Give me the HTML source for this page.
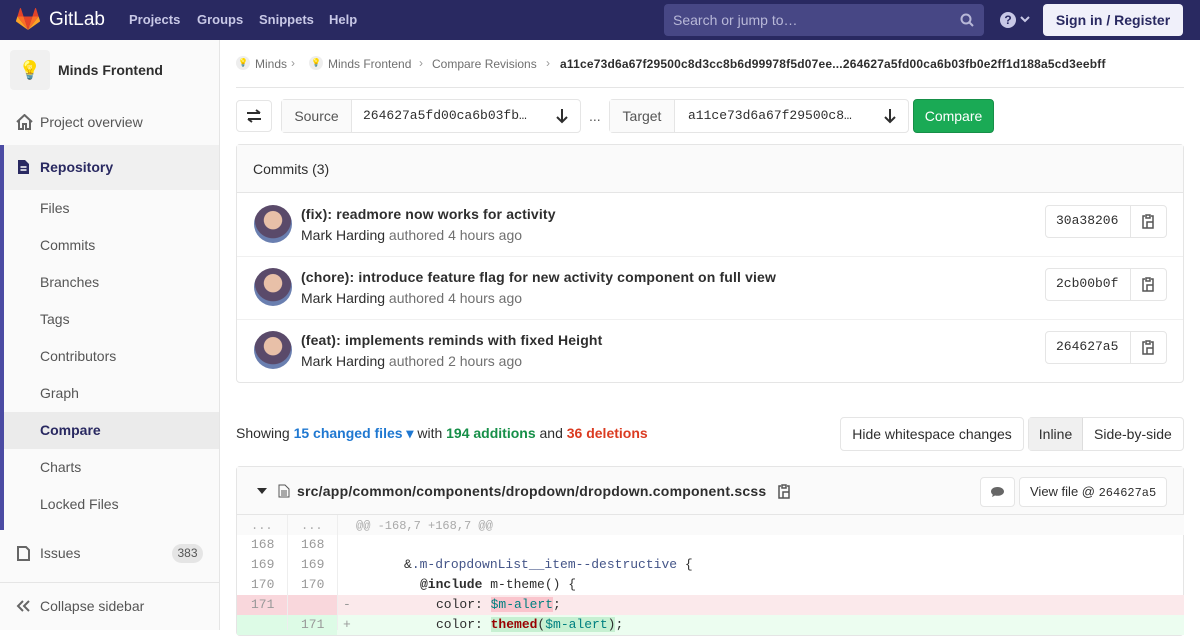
<!DOCTYPE html>
<html><head><meta charset="utf-8"><style>
*{box-sizing:border-box;margin:0;padding:0}
body{width:1200px;height:630px;overflow:hidden;font-family:"Liberation Sans",sans-serif;font-size:14px;color:#2e2e2e;background:#fff;position:relative}
.a{position:absolute}
.hdr{left:0;top:0;width:1200px;height:40px;background:#292961}
.nav{color:#c8c8e6;font-weight:bold;font-size:13px;top:12px}
.side{left:0;top:40px;width:220px;height:590px;background:#fafafa;border-right:1px solid #e5e5e5}
.si{left:40px;color:#555;font-size:14px}
.mono{font-family:"Liberation Mono",monospace}
.btn{border:1px solid #e5e5e5;border-radius:4px;background:#fff}
.row{left:237px;width:947px;height:20px;font-family:"Liberation Mono",monospace;font-size:13px;line-height:20px}
.av{width:38px;height:38px;border-radius:50%;background:radial-gradient(circle at 50% 40%,#e8c0a8 0 30%,#5a4a6a 32% 60%,#6a7fb0 62%)}
.t{font-weight:bold;letter-spacing:.15px}
</style></head><body>
<div class="a hdr"></div>
<svg class="a" style="left:16px;top:8px" width="24" height="22" viewBox="0 0 24 22"><path d="M12 22L16.4 8.5H7.6z" fill="#e24329"/><path d="M12 22L7.6 8.5H1.4z" fill="#fc6d26"/><path d="M1.4 8.5L0 12.8c-.1.4 0 .8.4 1L12 22z" fill="#fca326"/><path d="M1.4 8.5h6.2L4.9.3c-.1-.4-.7-.4-.9 0z" fill="#e24329"/><path d="M12 22l4.4-13.5h6.2z" fill="#fc6d26"/><path d="M22.6 8.5L24 12.8c.1.4 0 .8-.4 1L12 22z" fill="#fca326"/><path d="M22.6 8.5h-6.2L19.1.3c.1-.4.7-.4.9 0z" fill="#e24329"/></svg>
<div class="a" style="left:49px;top:9px;color:#fff;font-size:19px">GitLab</div>
<div class="a nav" style="left:129px">Projects</div>
<div class="a nav" style="left:197px">Groups</div>
<div class="a nav" style="left:259px">Snippets</div>
<div class="a nav" style="left:329px">Help</div>
<div class="a" style="left:664px;top:4px;width:320px;height:32px;background:#474785;border-radius:4px;color:#b8b8d8;padding:8px 9px;font-size:14px">Search or jump to…</div>
<svg class="a" style="left:960px;top:13px" width="14" height="14"><circle cx="6" cy="6" r="4.5" stroke="#b8b8d8" stroke-width="2" fill="none"/><path d="M9 9l4 4" stroke="#b8b8d8" stroke-width="2"/></svg>
<div class="a" style="left:1000px;top:12px;width:16px;height:16px;border-radius:50%;background:#c8c8e6;color:#292961;font-size:12px;font-weight:bold;text-align:center;line-height:16px">?</div>
<svg class="a" style="left:1020px;top:16px" width="10" height="7"><path d="M1 1l4 4 4-4" stroke="#c8c8e6" stroke-width="2" fill="none"/></svg>
<div class="a" style="left:1043px;top:4px;width:140px;height:32px;background:#f0f0fa;border-radius:4px;color:#292961;font-weight:bold;text-align:center;line-height:32px;font-size:14px">Sign in / Register</div>

<div class="a side"></div>
<div class="a" style="left:10px;top:50px;width:40px;height:40px;background:#f0f0f0;border-radius:4px;text-align:center;line-height:40px;font-size:18px">💡</div>
<div class="a" style="left:58px;top:62px;font-weight:bold;font-size:14px">Minds Frontend</div>
<svg class="a" style="left:16px;top:114px" width="17" height="16"><path d="M1 8L8.5 1 16 8M3 6v9h4v-5h3v5h4V6" stroke="#666" stroke-width="2" fill="none"/></svg>
<div class="a si" style="top:114px">Project overview</div>
<div class="a" style="left:0;top:145px;width:219px;height:385px;background:#f0f0f0"></div>
<div class="a" style="left:0;top:145px;width:4px;height:385px;background:#4b4ba3"></div>
<svg class="a" style="left:17px;top:159px" width="13" height="16"><path d="M1 1h7l4 4v10H1z" fill="#292961"/><path d="M3.5 8h6M3.5 11h6" stroke="#fff" stroke-width="1.5"/></svg>
<div class="a" style="left:40px;top:159px;font-weight:bold;color:#292961">Repository</div>
<div class="a" style="left:4px;top:190px;width:215px;height:340px;background:#fafafa"></div>
<div class="a si" style="top:200px">Files</div>
<div class="a si" style="top:237px">Commits</div>
<div class="a si" style="top:274px">Branches</div>
<div class="a si" style="top:311px">Tags</div>
<div class="a si" style="top:348px">Contributors</div>
<div class="a si" style="top:385px">Graph</div>
<div class="a" style="left:4px;top:412px;width:215px;height:37px;background:#ebebeb"></div>
<div class="a si" style="top:422px;font-weight:bold;color:#292961">Compare</div>
<div class="a si" style="top:459px">Charts</div>
<div class="a si" style="top:496px">Locked Files</div>
<svg class="a" style="left:17px;top:546px" width="14" height="15"><path d="M1 1h8l3 3v10H1z" stroke="#666" stroke-width="2" fill="none"/></svg>
<div class="a si" style="top:545px">Issues</div>
<div class="a" style="left:172px;top:544px;width:31px;height:19px;border-radius:10px;background:#e5e5e5;font-size:12px;color:#555;text-align:center;line-height:19px">383</div>
<div class="a" style="left:0;top:582px;width:219px;height:1px;background:#e5e5e5"></div>
<svg class="a" style="left:16px;top:600px" width="14" height="12"><path d="M7 1L2 6l5 5M13 1L8 6l5 5" stroke="#666" stroke-width="2" fill="none"/></svg>
<div class="a si" style="top:598px">Collapse sidebar</div>

<div class="a" style="left:236px;top:56px;width:14px;height:14px;border-radius:50%;background:#eee;font-size:8px;text-align:center;line-height:14px">💡</div>
<div class="a" style="left:255px;top:57px;font-size:12px;color:#707070">Minds</div>
<div class="a" style="left:291px;top:56px;font-size:12px;color:#999">›</div>
<div class="a" style="left:309px;top:56px;width:14px;height:14px;border-radius:50%;background:#eee;font-size:8px;text-align:center;line-height:14px">💡</div>
<div class="a" style="left:328px;top:57px;font-size:12px;color:#707070">Minds Frontend</div>
<div class="a" style="left:419px;top:56px;font-size:12px;color:#999">›</div>
<div class="a" style="left:432px;top:57px;font-size:12px;color:#707070">Compare Revisions</div>
<div class="a" style="left:546px;top:56px;font-size:12px;color:#999">›</div>
<div class="a" style="left:560px;top:57px;font-size:12px;font-weight:bold;color:#2e2e2e;letter-spacing:.2px">a11ce73d6a67f29500c8d3cc8b6d99978f5d07ee...264627a5fd00ca6b03fb0e2ff1d188a5cd3eebff</div>
<div class="a" style="left:236px;top:87px;width:948px;height:1px;background:#e5e5e5"></div>

<div class="a btn" style="left:236px;top:100px;width:36px;height:32px"></div>
<svg class="a" style="left:246px;top:109px" width="16" height="14"><path d="M1 4h13M10 1l4 3M15 10H2M6 13l-4-3" stroke="#2e2e2e" stroke-width="2" fill="none"/></svg>
<div class="a btn" style="left:281px;top:99px;width:300px;height:34px"></div>
<div class="a" style="left:282px;top:100px;width:70px;height:32px;background:#fafafa;border-right:1px solid #e5e5e5;text-align:center;line-height:32px;color:#555">Source</div>
<div class="a mono" style="left:363px;top:108px;font-size:13px">264627a5fd00ca6b03fb…</div>
<svg class="a" style="left:556px;top:108px" width="12" height="16"><path d="M6 1v13M1 9l5 5 5-5" stroke="#2e2e2e" stroke-width="2" fill="none"/></svg>
<div class="a" style="left:589px;top:108px;color:#555">...</div>
<div class="a btn" style="left:609px;top:99px;width:300px;height:34px"></div>
<div class="a" style="left:610px;top:100px;width:65px;height:32px;background:#fafafa;border-right:1px solid #e5e5e5;text-align:center;line-height:32px;color:#555">Target</div>
<div class="a mono" style="left:688px;top:108px;font-size:13px">a11ce73d6a67f29500c8…</div>
<svg class="a" style="left:884px;top:108px" width="12" height="16"><path d="M6 1v13M1 9l5 5 5-5" stroke="#2e2e2e" stroke-width="2" fill="none"/></svg>
<div class="a" style="left:913px;top:99px;width:81px;height:34px;background:#1aaa55;border:1px solid #168f48;border-radius:4px;color:#fff;text-align:center;line-height:32px">Compare</div>

<div class="a" style="left:236px;top:144px;width:948px;height:239px;border:1px solid #e5e5e5;border-radius:4px"></div>
<div class="a" style="left:237px;top:145px;width:946px;height:48px;background:#fafafa;border-bottom:1px solid #e5e5e5"></div>
<div class="a" style="left:253px;top:161px">Commits (3)</div>
<div class="a" style="left:237px;top:256px;width:946px;height:1px;background:#f0f0f0"></div>
<div class="a" style="left:237px;top:319px;width:946px;height:1px;background:#f0f0f0"></div>

<div class="a av" style="left:254px;top:205px"></div>
<div class="a t" style="left:301px;top:206px">(fix): readmore now works for activity</div>
<div class="a" style="left:301px;top:227px">Mark Harding <span style="color:#707070">authored 4 hours ago</span></div>
<div class="a av" style="left:254px;top:268px"></div>
<div class="a t" style="left:301px;top:269px">(chore): introduce feature flag for new activity component on full view</div>
<div class="a" style="left:301px;top:290px">Mark Harding <span style="color:#707070">authored 4 hours ago</span></div>
<div class="a av" style="left:254px;top:331px"></div>
<div class="a t" style="left:301px;top:332px">(feat): implements reminds with fixed Height</div>
<div class="a" style="left:301px;top:353px">Mark Harding <span style="color:#707070">authored 2 hours ago</span></div>

<div class="a btn" style="left:1045px;top:205px;width:122px;height:33px"></div><div class="a mono" style="left:1056px;top:213px;font-size:13px">30a38206</div><div class="a" style="left:1130px;top:206px;width:1px;height:31px;background:#e5e5e5"></div>
<div class="a btn" style="left:1045px;top:268px;width:122px;height:33px"></div><div class="a mono" style="left:1056px;top:276px;font-size:13px">2cb00b0f</div><div class="a" style="left:1130px;top:269px;width:1px;height:31px;background:#e5e5e5"></div>
<div class="a btn" style="left:1045px;top:331px;width:122px;height:33px"></div><div class="a mono" style="left:1056px;top:339px;font-size:13px">264627a5</div><div class="a" style="left:1130px;top:332px;width:1px;height:31px;background:#e5e5e5"></div>
<svg class="a" style="left:1142px;top:214px" width="12" height="15"><path d="M3 2H1v12h10V2H9M4 1h4v3H4zM5 8h6v6H5z" stroke="#555" stroke-width="1.5" fill="none"/></svg>
<svg class="a" style="left:1142px;top:277px" width="12" height="15"><path d="M3 2H1v12h10V2H9M4 1h4v3H4zM5 8h6v6H5z" stroke="#555" stroke-width="1.5" fill="none"/></svg>
<svg class="a" style="left:1142px;top:340px" width="12" height="15"><path d="M3 2H1v12h10V2H9M4 1h4v3H4zM5 8h6v6H5z" stroke="#555" stroke-width="1.5" fill="none"/></svg>

<div class="a" style="left:236px;top:425px">Showing <b style="color:#1f78d1">15 changed files ▾</b> with <b style="color:#168f48">194 additions</b> and <b style="color:#db3b21">36 deletions</b></div>
<div class="a btn" style="left:840px;top:417px;width:184px;height:34px;text-align:center;line-height:32px">Hide whitespace changes</div>
<div class="a btn" style="left:1028px;top:417px;width:156px;height:34px"></div>
<div class="a" style="left:1029px;top:418px;width:54px;height:32px;background:#f0f0f0;border-right:1px solid #ddd;text-align:center;line-height:32px">Inline</div>
<div class="a" style="left:1094px;top:426px">Side-by-side</div>

<div class="a" style="left:236px;top:466px;width:948px;height:170px;border:1px solid #e5e5e5;border-radius:4px"></div>
<div class="a" style="left:237px;top:467px;width:946px;height:48px;background:#fafafa;border-bottom:1px solid #e5e5e5"></div>
<svg class="a" style="left:257px;top:488px" width="10" height="6"><path d="M0 0h10L5 6z" fill="#2e2e2e"/></svg>
<svg class="a" style="left:278px;top:484px" width="12" height="14"><path d="M1 1h6l4 4v8H1z" stroke="#555" fill="none"/><path d="M3 7h6M3 9h6M3 11h6" stroke="#555"/></svg>
<div class="a" style="left:297px;top:483px;font-weight:bold;letter-spacing:.22px">src/app/common/components/dropdown/dropdown.component.scss</div>
<svg class="a" style="left:778px;top:484px" width="12" height="15"><path d="M3 2H1v12h10V2H9M4 1h4v3H4zM5 8h6v6H5z" stroke="#555" stroke-width="1.5" fill="none"/></svg>
<div class="a btn" style="left:980px;top:477px;width:35px;height:30px"></div>
<svg class="a" style="left:990px;top:486px" width="15" height="12"><path d="M7.5 1C3.5 1 1 3 1 5.5c0 1.3.7 2.4 1.8 3.2L2 11l3-1.5c.8.2 1.6.3 2.5.3 4 0 6.5-2 6.5-4.3S11.5 1 7.5 1z" fill="#666"/></svg>
<div class="a btn" style="left:1019px;top:477px;width:148px;height:30px;line-height:28px;padding-left:10px;font-size:13px">View file @ <span class="mono" style="font-size:12px">264627a5</span></div>

<div class="a row" style="top:515px;background:#fafafa"></div>
<div class="a row" style="top:516px;color:#aaa;font-size:12px"><span class="a" style="left:14px">...</span><span class="a" style="left:64px">...</span><span class="a" style="left:119px">@@ -168,7 +168,7 @@</span></div>
<div class="a row" style="top:535px;color:#999"><span class="a" style="left:14px">168</span><span class="a" style="left:64px">168</span></div>
<div class="a row" style="top:555px;color:#999"><span class="a" style="left:14px">169</span><span class="a" style="left:64px">169</span><span class="a" style="left:167px;color:#2e2e2e">&amp;<span style="color:#445588">.m-dropdownList__item--destructive</span> {</span></div>
<div class="a row" style="top:575px;color:#999"><span class="a" style="left:14px">170</span><span class="a" style="left:64px">170</span><span class="a" style="left:183px;color:#2e2e2e"><b>@include</b> m-theme() {</span></div>
<div class="a row" style="top:595px;background:#fbe9eb;color:#999"><span class="a" style="left:0;width:100px;height:20px;background:#f9d7dc"></span><span class="a" style="left:14px">171</span><span class="a" style="left:106px">-</span><span class="a" style="left:199px;color:#2e2e2e">color: <span style="color:#008080;background:#fac5cd">$m-alert</span>;</span></div>
<div class="a row" style="top:615px;background:#ecfdf0;color:#999"><span class="a" style="left:0;width:100px;height:20px;background:#ddfbe6"></span><span class="a" style="left:64px">171</span><span class="a" style="left:106px">+</span><span class="a" style="left:199px;color:#2e2e2e">color: <b style="color:#900;background:#c7f0d2">themed</b><span style="background:#c7f0d2">(<span style="color:#008080">$m-alert</span>)</span>;</span></div>
<div class="a" style="left:287px;top:515px;width:1px;height:115px;background:#eee"></div>
<div class="a" style="left:337px;top:515px;width:1px;height:115px;background:#eee"></div>
</body></html>
